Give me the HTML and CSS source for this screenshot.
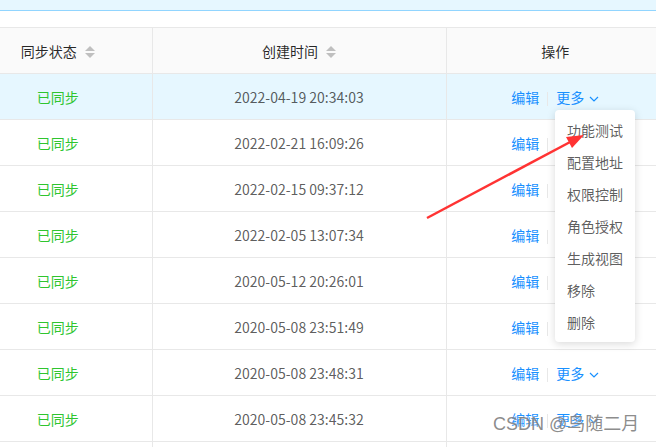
FILE: index.html
```html
<!DOCTYPE html>
<html lang="zh-CN">
<head>
    <meta charset="UTF-8">
    <title>同步列表</title>
    <link rel="stylesheet" href="styles.css">
</head>
<body>
    <div class="page">
        <div class="top-bar"></div>
        <div class="spacer"></div>

        <table class="data-table">
            <thead>
                <tr>
                    <th class="col-status">同步状态 <span class="sorter"><i class="up"></i><i class="down"></i></span></th>
                    <th class="col-time">创建时间 <span class="sorter"><i class="up"></i><i class="down"></i></span></th>
                    <th class="col-action">操作</th>
                </tr>
            </thead>
            <tbody>
                <tr class="active">
                    <td class="col-status status-ok">已同步</td>
                    <td class="col-time">2022-04-19 20:34:03</td>
                    <td class="col-action"><span class="link">编辑</span><span class="divider"></span><span class="link">更多 <svg class="chev" viewBox="0 0 10 6"><path d="M1 1 L5 5 L9 1" /></svg></span></td>
                </tr>
                <tr>
                    <td class="col-status status-ok">已同步</td>
                    <td class="col-time">2022-02-21 16:09:26</td>
                    <td class="col-action"><span class="link">编辑</span><span class="divider"></span><span class="link">更多 <svg class="chev" viewBox="0 0 10 6"><path d="M1 1 L5 5 L9 1" /></svg></span></td>
                </tr>
                <tr>
                    <td class="col-status status-ok">已同步</td>
                    <td class="col-time">2022-02-15 09:37:12</td>
                    <td class="col-action"><span class="link">编辑</span><span class="divider"></span><span class="link">更多 <svg class="chev" viewBox="0 0 10 6"><path d="M1 1 L5 5 L9 1" /></svg></span></td>
                </tr>
                <tr>
                    <td class="col-status status-ok">已同步</td>
                    <td class="col-time">2022-02-05 13:07:34</td>
                    <td class="col-action"><span class="link">编辑</span><span class="divider"></span><span class="link">更多 <svg class="chev" viewBox="0 0 10 6"><path d="M1 1 L5 5 L9 1" /></svg></span></td>
                </tr>
                <tr>
                    <td class="col-status status-ok">已同步</td>
                    <td class="col-time">2020-05-12 20:26:01</td>
                    <td class="col-action"><span class="link">编辑</span><span class="divider"></span><span class="link">更多 <svg class="chev" viewBox="0 0 10 6"><path d="M1 1 L5 5 L9 1" /></svg></span></td>
                </tr>
                <tr>
                    <td class="col-status status-ok">已同步</td>
                    <td class="col-time">2020-05-08 23:51:49</td>
                    <td class="col-action"><span class="link">编辑</span><span class="divider"></span><span class="link">更多 <svg class="chev" viewBox="0 0 10 6"><path d="M1 1 L5 5 L9 1" /></svg></span></td>
                </tr>
                <tr>
                    <td class="col-status status-ok">已同步</td>
                    <td class="col-time">2020-05-08 23:48:31</td>
                    <td class="col-action"><span class="link">编辑</span><span class="divider"></span><span class="link">更多 <svg class="chev" viewBox="0 0 10 6"><path d="M1 1 L5 5 L9 1" /></svg></span></td>
                </tr>
                <tr>
                    <td class="col-status status-ok">已同步</td>
                    <td class="col-time">2020-05-08 23:45:32</td>
                    <td class="col-action"><span class="link">编辑</span><span class="divider"></span><span class="link">更多 <svg class="chev" viewBox="0 0 10 6"><path d="M1 1 L5 5 L9 1" /></svg></span></td>
                </tr>
                <tr>
                    <td class="col-status"></td>
                    <td class="col-time"></td>
                    <td class="col-action"></td>
                </tr>
            </tbody>
        </table>

        <!-- dropdown opened from the first row -->
        <ul class="dropdown-menu">
            <li>功能测试</li>
            <li>配置地址</li>
            <li>权限控制</li>
            <li>角色授权</li>
            <li>生成视图</li>
            <li>移除</li>
            <li>删除</li>
        </ul>

        <svg class="mark-arrow" width="656" height="447" viewBox="0 0 656 447">
            <line x1="427" y1="218" x2="572" y2="141" />
            <polygon points="584,135 566,137 572,148" />
        </svg>

        <div class="watermark">CSDN @鸟随二月</div>
    </div>
</body>
</html>
```

FILE: styles.css
```css
html, body {
    margin: 0;
    padding: 0;
    background: #fff;
    overflow: hidden;
}

body {
    font-family: 'Microsoft YaHei', 'Noto Sans CJK SC', 'Open Sans', sans-serif;
    font-size: 14px;
    color: rgba(0, 0, 0, 0.65);
}

.page {
    position: relative;
    width: 656px;
    height: 447px;
    overflow: hidden;
}

.top-bar {
    height: 10px;
    background: #e6f7ff;
    border-bottom: 1px solid #91d5ff;
}

.spacer {
    height: 16px;
}

.data-table {
    width: 664px;
    border-collapse: collapse;
    table-layout: fixed;
    border-top: 1px solid #e8e8e8;
}

.data-table th,
.data-table td {
    height: 46px;
    padding: 0;
    text-align: center;
    border-bottom: 1px solid #e8e8e8;
    border-right: 1px solid #e8e8e8;
    box-sizing: border-box;
    white-space: nowrap;
}

.data-table th {
    background: #fafafa;
    color: rgba(0, 0, 0, 0.85);
    font-weight: normal;
}

.data-table .col-status {
    width: 152px;
    padding-right: 36px;
}

.data-table .col-time {
    width: 294px;
}

.data-table .col-action {
    width: 218px;
    border-right: none;
}

.data-table tr.active td {
    background: #e6f7ff;
}

.status-ok {
    color: #2fc52f;
}

.sorter {
    display: inline-flex;
    flex-direction: column;
    gap: 2px;
    vertical-align: middle;
    margin-left: 5px;
    position: relative;
    top: -1px;
}

.sorter i {
    display: block;
    width: 0;
    height: 0;
    border-left: 5px solid transparent;
    border-right: 5px solid transparent;
}

.sorter .up {
    border-bottom: 5px solid #bfbfbf;
}

.sorter .down {
    border-top: 5px solid #bfbfbf;
}

.link {
    color: #1890ff;
}

.divider {
    display: inline-block;
    width: 1px;
    height: 14px;
    background: #e8e8e8;
    margin: 0 8px;
    vertical-align: middle;
}

.chev {
    width: 10px;
    height: 6px;
    margin-left: 2px;
    vertical-align: middle;
    fill: none;
    stroke: #1890ff;
    stroke-width: 1.2;
}

.dropdown-menu {
    position: absolute;
    left: 555px;
    top: 110px;
    width: 80px;
    margin: 0;
    padding: 4px 0;
    list-style: none;
    background: #fff;
    border-radius: 4px;
    box-shadow: 0 2px 8px rgba(0, 0, 0, 0.15);
    box-sizing: border-box;
}

.dropdown-menu li {
    padding: 5px 12px;
    line-height: 22px;
    color: rgba(0, 0, 0, 0.65);
}

.mark-arrow {
    position: absolute;
    left: 0;
    top: 0;
    pointer-events: none;
}

.mark-arrow line {
    stroke: #f33;
    stroke-width: 2.5;
}

.mark-arrow polygon {
    fill: #f33;
}

.watermark {
    position: absolute;
    left: 493px;
    top: 411px;
    font-size: 18px;
    line-height: 26px;
    color: rgba(110, 110, 110, 0.8);
    text-shadow: 0 0 2px rgba(255, 255, 255, 0.8);
    font-family: 'Liberation Sans', 'Noto Sans CJK SC', sans-serif;
}
```
